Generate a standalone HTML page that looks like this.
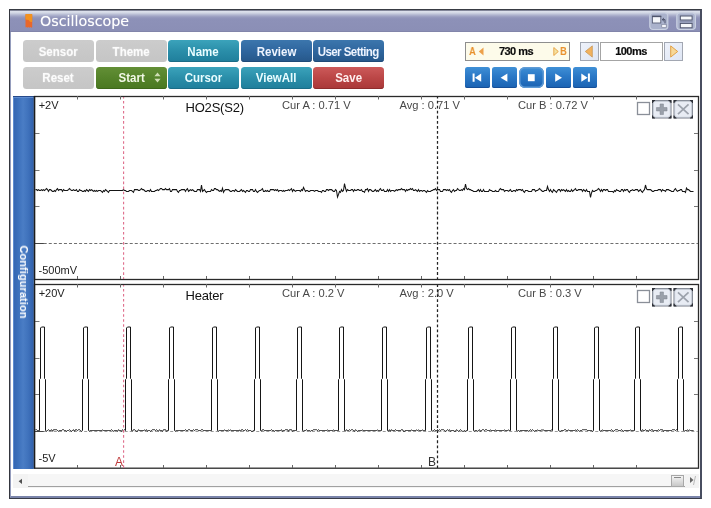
<!DOCTYPE html>
<html><head><meta charset="utf-8"><title>Oscilloscope</title>
<style>
html,body{margin:0;padding:0;background:#fff}
body{width:711px;height:508px;position:relative;overflow:hidden;font-family:"Liberation Sans",Arial,sans-serif}
.abs{position:absolute}
#ttl,.b,.num,.or,#cfg{will-change:transform}
#win{position:absolute;left:9px;top:9px;width:693px;height:490px;box-sizing:border-box;background:#fff;
 border-top:1px solid #383b43;border-left:1px solid #34363e;border-right:2px solid #484e60;border-bottom:1px solid #383c48}
#win:before{content:"";position:absolute;left:0;top:0;right:0;bottom:0;border-left:1.5px solid #959dbd;border-bottom:2px solid #7a84aa;border-right:0}
#tbar{position:absolute;left:10px;top:10px;width:690px;height:22px;
 background:linear-gradient(to bottom,#62667a 0,#8e92a4 0.7px,#d6dae6 1.2px,#dde1ec 1.6px,#d0d5e3 3px,#b0b5cf 5px,#979bbe 7px,#8d91b8 9px,#8b8fb6 20.5px,#7d80a4 22px)}
#ttl{position:absolute;left:39.7px;top:11.4px;font:14.3px "DejaVu Sans",Verdana,sans-serif;color:#fff;line-height:21px;letter-spacing:0px;text-shadow:0 0 1px rgba(255,255,255,.5)}
.b{position:absolute;width:70.6px;height:21.5px;border-radius:3.5px;color:#fff;font:bold 12.5px/24px "Liberation Sans",Arial,sans-serif;text-align:center;box-sizing:border-box;white-space:nowrap;overflow:hidden}
.b.r2{line-height:22.8px}
.b .t{display:inline-block;transform:scaleX(.92);transform-origin:50% 50%}
.gy{background:linear-gradient(#cccccc,#c5c5c5);text-shadow:0 0 1.5px rgba(255,255,255,.6);color:rgba(255,255,255,.88)}
.tl{background:linear-gradient(#3ba3bb,#2a8ea9 50%,#1f7e9b);box-shadow:inset 0 -1px 0 #1a6c86;color:#e9fdff}
.bl{background:linear-gradient(#3c76ad,#2f669e 50%,#265789);box-shadow:inset 0 -1px 0 #1f4a78;color:#eef4ff}
.gn{background:linear-gradient(#638f36,#55832a 50%,#4a7821);box-shadow:inset 0 -1px 0 #3e681a;color:#f2f8e6}
.rd{background:linear-gradient(#cc5a5a,#bb4646 50%,#a93838);box-shadow:inset 0 -1px 0 #8e2c2c;color:#fff0f0}
.pb{position:absolute;width:24.5px;height:21px;border-radius:2.5px;background:linear-gradient(#3f8fd6,#2a78c6 45%,#1a62b2);box-shadow:inset 0 -1px 0 #164f98}
.pb.st{border-radius:6px;box-shadow:inset 0 0 0 1.5px #5f9bd6}
.pb svg{position:absolute;left:0;top:0}
#side{position:absolute;left:13px;top:96px;width:21px;height:372.5px;background:linear-gradient(to right,#3464b0 0,#3b6fbb 22%,#4a7dc5 48%,#3f72bc 72%,#2f5eaa 100%);border-top:1px solid #264a8a;box-shadow:inset 1px 1px 0 #5d8bd0,inset -1px 0 0 #5382c8;box-sizing:border-box}
#cfg{position:absolute;left:24px;top:282.3px;width:0;height:0}
#cfg span{position:absolute;left:0;top:0;transform:translate(-50%,-50%) rotate(90deg);white-space:nowrap;color:#fff;font:bold 11px "Liberation Sans",Arial,sans-serif;letter-spacing:0.07px}
.box{position:absolute;box-sizing:border-box;border:1px solid #8c8c8c}
.num{font:bold 11px/17px "Liberation Sans",Arial,sans-serif;color:#0c0c0c;-webkit-text-stroke:0.2px #111;letter-spacing:-0.55px;text-align:center}
.or{color:#e8902c;font:bold 11px/17px "Liberation Sans",Arial,sans-serif;position:absolute;transform:scaleX(.86);transform-origin:0 50%}
</style></head><body>
<div id="win"></div>
<div id="tbar"></div>
<svg class="abs" style="left:24px;top:13px" width="10" height="16" viewBox="0 0 10 16"><path d="M2,1h5.6l0.6,0.6v12.6l-0.9,0.6l-0.9,-0.9l-0.9,0.9l-0.9,-0.9l-0.9,0.9l-0.9,-0.9l-0.9,0.6l-0.4,-0.4v-12.5z" fill="#e9672a"/><path d="M2,1h5.6l0.6,0.6v7.4l-2.2,-0.2l-1.4,-1.8l-3.1,-0.4v-5z" fill="#f2921f"/></svg>
<div id="ttl">Oscilloscope</div>
<!-- title icons -->
<svg class="abs" style="left:649px;top:11.5px" width="48" height="19" viewBox="0 0 48 19">
<rect x="0.8" y="0.9" width="18" height="16.6" rx="3.2" fill="#aab2cc" stroke="#c9d0e1" stroke-width="1.2"/>
<rect x="3.4" y="4.6" width="8.4" height="6.4" fill="#f4f6fa" stroke="#5a6078" stroke-width="0.9"/>
<rect x="3" y="3.6" width="9.3" height="1.5" fill="#4e546c"/>
<rect x="12.8" y="12.4" width="4.4" height="3.2" fill="#f4f6fa" stroke="#787e96" stroke-width="0.6"/>
<path d="M13.2,7.6h2.8v3.8M13.2,7.6l1.7,-1.6M13.2,7.6l1.7,1.6" stroke="#4a5068" stroke-width="1" fill="none"/>
<rect x="27.8" y="0.9" width="18.6" height="16.6" rx="3.2" fill="#aab2cc" stroke="#c9d0e1" stroke-width="1.2"/>
<rect x="31.3" y="4" width="11.8" height="4" fill="#f6f8fb" stroke="#50566e" stroke-width="1"/>
<rect x="31.3" y="11.4" width="11.8" height="4.4" fill="#f6f8fb" stroke="#50566e" stroke-width="1"/>
<rect x="30.8" y="9.4" width="12.8" height="0.8" fill="#7a80a0"/>
</svg>
<div class="b gy" style="left:23.2px;top:40.3px"><span class="t">Sensor</span></div><div class="b gy" style="left:95.7px;top:40.3px"><span class="t">Theme</span></div><div class="b tl" style="left:168.1px;top:40.3px"><span class="t">Name</span></div><div class="b bl" style="left:240.6px;top:40.3px"><span class="t">Review</span></div><div class="b bl" style="left:313.0px;top:40.3px"><span class="t"><span style="letter-spacing:-0.6px">User Setting</span></span></div><div class="b gy r2" style="left:23.2px;top:66.5px"><span class="t">Reset</span></div><div class="b gn r2" style="left:95.7px;top:66.5px"><span class="t"><span style="position:relative;left:0.5px">Start</span></span><svg width="9" height="11" viewBox="0 0 9 11" style="position:absolute;left:57px;top:4.8px"><path d="M4.5,0.6L7.6,4.3H1.4zM4.5,10.4L7.6,6.7H1.4z" fill="#cfddb4"/></svg></div><div class="b tl r2" style="left:168.1px;top:66.5px"><span class="t">Cursor</span></div><div class="b tl r2" style="left:240.6px;top:66.5px"><span class="t">ViewAll</span></div><div class="b rd r2" style="left:313.0px;top:66.5px"><span class="t">Save</span></div>
<!-- A/B range box -->
<div class="box" style="left:465px;top:42px;width:105px;height:18.5px;background:#fdfbea;border-color:#8e8e8e"></div>
<div class="or" style="left:469px;top:43px">A</div>
<svg class="abs" style="left:477.5px;top:47px" width="6" height="9" viewBox="0 0 6 9"><path d="M5.5,0.5v8L0.8,4.5z" fill="#eda04a"/></svg>
<div class="abs num" style="left:490px;top:43px;width:52px">730 ms</div>
<svg class="abs" style="left:553px;top:47px" width="6" height="9" viewBox="0 0 6 9"><path d="M0.8,0.5v8L5.3,4.5z" fill="#f4e2a0" stroke="#e8a040" stroke-width="0.9"/></svg>
<div class="or" style="left:559.5px;top:43px">B</div>
<!-- time/div -->
<div class="box" style="left:580px;top:42px;width:18.5px;height:18.5px;background:linear-gradient(135deg,#eef2fb,#dfe6f4);border-color:#a2a7b2"></div>
<svg class="abs" style="left:584px;top:45px" width="10" height="13" viewBox="0 0 10 13"><path d="M8.3,0.9v11.2L1.3,6.5z" fill="#f2b25e" stroke="#c89858" stroke-width="0.8"/></svg>
<div class="box" style="left:600px;top:42px;width:62.5px;height:18.5px;background:#fff;border-color:#a4a4a4"></div>
<div class="abs num" style="left:600px;top:43px;width:62px">100ms</div>
<div class="box" style="left:664px;top:42px;width:18.5px;height:18.5px;background:linear-gradient(135deg,#eef2fb,#dfe6f4);border-color:#a2a7b2"></div>
<svg class="abs" style="left:669px;top:45px" width="10" height="13" viewBox="0 0 10 13"><path d="M1.7,0.9v11.2L8.7,6.5z" fill="#f7d898" stroke="#e09a38" stroke-width="0.9"/></svg>
<div class="pb" style="left:465.4px;top:66.5px"><svg width="24.5" height="21" viewBox="0 0 24.5 21"><path d="M7.6,6.6h2v8.2h-2zM16.2,6.6v8.2L9.9,10.7z" fill="#fff"/></svg></div><div class="pb" style="left:492.2px;top:66.5px"><svg width="24.5" height="21" viewBox="0 0 24.5 21"><path d="M15.4,6.6v8.2L8.6,10.7z" fill="#fff"/></svg></div><div class="pb st" style="left:519.1px;top:66.5px"><svg width="24.5" height="21" viewBox="0 0 24.5 21"><rect x="8.9" y="7.2" width="6.8" height="7" fill="#fff"/></svg></div><div class="pb" style="left:546.0px;top:66.5px"><svg width="24.5" height="21" viewBox="0 0 24.5 21"><path d="M9.2,6.6v8.2L16,10.7z" fill="#fff"/></svg></div><div class="pb" style="left:572.8px;top:66.5px"><svg width="24.5" height="21" viewBox="0 0 24.5 21"><path d="M14.9,6.6h2v8.2h-2zM8.3,6.6v8.2L14.6,10.7z" fill="#fff"/></svg></div>
<div id="side"></div>
<div id="cfg"><span>Configuration</span></div>
<svg width="711" height="508" viewBox="0 0 711 508" style="position:absolute;left:0;top:0;will-change:transform">
<style>
.lb{font:11px "Liberation Sans",Arial,sans-serif;fill:#222}
.g{fill:#484848;font-size:11.15px}
.tt{font:13px "Liberation Sans",Arial,sans-serif;fill:#111;letter-spacing:-0.2px}
</style>
<rect x="34.5" y="96.5" width="664" height="183" fill="#fff" stroke="#2a2a2a" stroke-width="1.3"/><line x1="35" y1="133.5" x2="39.5" y2="133.5" stroke="#777" stroke-width="1"/><line x1="694" y1="133.5" x2="698" y2="133.5" stroke="#777" stroke-width="1"/><line x1="35" y1="170.5" x2="39.5" y2="170.5" stroke="#777" stroke-width="1"/><line x1="694" y1="170.5" x2="698" y2="170.5" stroke="#777" stroke-width="1"/><line x1="35" y1="206.5" x2="39.5" y2="206.5" stroke="#777" stroke-width="1"/><line x1="694" y1="206.5" x2="698" y2="206.5" stroke="#777" stroke-width="1"/><line x1="35" y1="243.5" x2="44" y2="243.5" stroke="#444" stroke-width="1"/><line x1="43.7" y1="243.5" x2="698" y2="243.5" stroke="#6e6e6e" stroke-width="1" stroke-dasharray="3 2.06"/><line x1="77.5" y1="96" x2="77.5" y2="99.5" stroke="#666" stroke-width="1"/><line x1="77.5" y1="276" x2="77.5" y2="279" stroke="#666" stroke-width="1"/><line x1="120.5" y1="96" x2="120.5" y2="99.5" stroke="#666" stroke-width="1"/><line x1="120.5" y1="276" x2="120.5" y2="279" stroke="#666" stroke-width="1"/><line x1="163.5" y1="96" x2="163.5" y2="99.5" stroke="#666" stroke-width="1"/><line x1="163.5" y1="276" x2="163.5" y2="279" stroke="#666" stroke-width="1"/><line x1="206.5" y1="96" x2="206.5" y2="99.5" stroke="#666" stroke-width="1"/><line x1="206.5" y1="276" x2="206.5" y2="279" stroke="#666" stroke-width="1"/><line x1="249.5" y1="96" x2="249.5" y2="99.5" stroke="#666" stroke-width="1"/><line x1="249.5" y1="276" x2="249.5" y2="279" stroke="#666" stroke-width="1"/><line x1="292.5" y1="96" x2="292.5" y2="99.5" stroke="#666" stroke-width="1"/><line x1="292.5" y1="276" x2="292.5" y2="279" stroke="#666" stroke-width="1"/><line x1="335.5" y1="96" x2="335.5" y2="99.5" stroke="#666" stroke-width="1"/><line x1="335.5" y1="276" x2="335.5" y2="279" stroke="#666" stroke-width="1"/><line x1="378.5" y1="96" x2="378.5" y2="99.5" stroke="#666" stroke-width="1"/><line x1="378.5" y1="276" x2="378.5" y2="279" stroke="#666" stroke-width="1"/><line x1="421.5" y1="96" x2="421.5" y2="99.5" stroke="#666" stroke-width="1"/><line x1="421.5" y1="276" x2="421.5" y2="279" stroke="#666" stroke-width="1"/><line x1="464.5" y1="96" x2="464.5" y2="99.5" stroke="#666" stroke-width="1"/><line x1="464.5" y1="276" x2="464.5" y2="279" stroke="#666" stroke-width="1"/><line x1="507.5" y1="96" x2="507.5" y2="99.5" stroke="#666" stroke-width="1"/><line x1="507.5" y1="276" x2="507.5" y2="279" stroke="#666" stroke-width="1"/><line x1="550.5" y1="96" x2="550.5" y2="99.5" stroke="#666" stroke-width="1"/><line x1="550.5" y1="276" x2="550.5" y2="279" stroke="#666" stroke-width="1"/><line x1="593.5" y1="96" x2="593.5" y2="99.5" stroke="#666" stroke-width="1"/><line x1="593.5" y1="276" x2="593.5" y2="279" stroke="#666" stroke-width="1"/><line x1="636.5" y1="96" x2="636.5" y2="99.5" stroke="#666" stroke-width="1"/><line x1="636.5" y1="276" x2="636.5" y2="279" stroke="#666" stroke-width="1"/><text x="38.7" y="108.8" class="lb">+2V</text><text x="38.5" y="273.8" class="lb">-500mV</text><text x="185.5" y="112" class="tt">HO2S(S2)</text><text x="282" y="108.3" class="lb g" dy="0.5">Cur A : 0.71 V</text><text x="399.5" y="108.3" class="lb g" dy="0.5">Avg : 0.71 V</text><text x="518" y="108.3" class="lb g" dy="0.5">Cur B : 0.72 V</text><rect x="637.5" y="102.5" width="12" height="12" fill="#fff" stroke="#8a8f98" stroke-width="1.3"/><rect x="652" y="100" width="19.5" height="18.5" rx="1" fill="#767b86"/><rect x="652" y="100" width="3" height="3" fill="#2e3138"/><rect x="668.5" y="100" width="3" height="3" fill="#2e3138"/><rect x="652" y="115.5" width="3" height="3" fill="#2e3138"/><rect x="668.5" y="115.5" width="3" height="3" fill="#2e3138"/><rect x="653.2" y="101.2" width="17.1" height="16.1" rx="2.6" fill="#e8ecf4" stroke="#c4cad4" stroke-width="0.8"/><path d="M660.05,103.95h3.4v3.6h3.6v3.4h-3.6v3.6h-3.4v-3.6h-3.6v-3.4h3.6z" fill="#9aa0aa" stroke="#7c828c" stroke-width="0.5"/><rect x="673.5" y="100" width="19.5" height="18.5" rx="1" fill="#767b86"/><rect x="673.5" y="100" width="3" height="3" fill="#2e3138"/><rect x="690.0" y="100" width="3" height="3" fill="#2e3138"/><rect x="673.5" y="115.5" width="3" height="3" fill="#2e3138"/><rect x="690.0" y="115.5" width="3" height="3" fill="#2e3138"/><rect x="674.7" y="101.2" width="17.1" height="16.1" rx="2.6" fill="#e8ecf4" stroke="#c4cad4" stroke-width="0.8"/><path d="M677.95,104.45L688.55,114.05M688.55,104.45L677.95,114.05" stroke="#9ca2ac" stroke-width="1.7" fill="none"/>
<rect x="34.5" y="284.5" width="664" height="183.7" fill="#fff" stroke="#2a2a2a" stroke-width="1.3"/><line x1="35" y1="321.5" x2="39.5" y2="321.5" stroke="#777" stroke-width="1"/><line x1="694" y1="321.5" x2="698" y2="321.5" stroke="#777" stroke-width="1"/><line x1="35" y1="358.5" x2="39.5" y2="358.5" stroke="#777" stroke-width="1"/><line x1="694" y1="358.5" x2="698" y2="358.5" stroke="#777" stroke-width="1"/><line x1="35" y1="394.5" x2="39.5" y2="394.5" stroke="#777" stroke-width="1"/><line x1="694" y1="394.5" x2="698" y2="394.5" stroke="#777" stroke-width="1"/><line x1="35" y1="431.5" x2="44" y2="431.5" stroke="#444" stroke-width="1"/><line x1="43.7" y1="431.5" x2="698" y2="431.5" stroke="#9a9a9a" stroke-width="1" stroke-dasharray="3 2.06"/><line x1="77.5" y1="284" x2="77.5" y2="287.5" stroke="#666" stroke-width="1"/><line x1="77.5" y1="465" x2="77.5" y2="468" stroke="#666" stroke-width="1"/><line x1="120.5" y1="284" x2="120.5" y2="287.5" stroke="#666" stroke-width="1"/><line x1="120.5" y1="465" x2="120.5" y2="468" stroke="#666" stroke-width="1"/><line x1="163.5" y1="284" x2="163.5" y2="287.5" stroke="#666" stroke-width="1"/><line x1="163.5" y1="465" x2="163.5" y2="468" stroke="#666" stroke-width="1"/><line x1="206.5" y1="284" x2="206.5" y2="287.5" stroke="#666" stroke-width="1"/><line x1="206.5" y1="465" x2="206.5" y2="468" stroke="#666" stroke-width="1"/><line x1="249.5" y1="284" x2="249.5" y2="287.5" stroke="#666" stroke-width="1"/><line x1="249.5" y1="465" x2="249.5" y2="468" stroke="#666" stroke-width="1"/><line x1="292.5" y1="284" x2="292.5" y2="287.5" stroke="#666" stroke-width="1"/><line x1="292.5" y1="465" x2="292.5" y2="468" stroke="#666" stroke-width="1"/><line x1="335.5" y1="284" x2="335.5" y2="287.5" stroke="#666" stroke-width="1"/><line x1="335.5" y1="465" x2="335.5" y2="468" stroke="#666" stroke-width="1"/><line x1="378.5" y1="284" x2="378.5" y2="287.5" stroke="#666" stroke-width="1"/><line x1="378.5" y1="465" x2="378.5" y2="468" stroke="#666" stroke-width="1"/><line x1="421.5" y1="284" x2="421.5" y2="287.5" stroke="#666" stroke-width="1"/><line x1="421.5" y1="465" x2="421.5" y2="468" stroke="#666" stroke-width="1"/><line x1="464.5" y1="284" x2="464.5" y2="287.5" stroke="#666" stroke-width="1"/><line x1="464.5" y1="465" x2="464.5" y2="468" stroke="#666" stroke-width="1"/><line x1="507.5" y1="284" x2="507.5" y2="287.5" stroke="#666" stroke-width="1"/><line x1="507.5" y1="465" x2="507.5" y2="468" stroke="#666" stroke-width="1"/><line x1="550.5" y1="284" x2="550.5" y2="287.5" stroke="#666" stroke-width="1"/><line x1="550.5" y1="465" x2="550.5" y2="468" stroke="#666" stroke-width="1"/><line x1="593.5" y1="284" x2="593.5" y2="287.5" stroke="#666" stroke-width="1"/><line x1="593.5" y1="465" x2="593.5" y2="468" stroke="#666" stroke-width="1"/><line x1="636.5" y1="284" x2="636.5" y2="287.5" stroke="#666" stroke-width="1"/><line x1="636.5" y1="465" x2="636.5" y2="468" stroke="#666" stroke-width="1"/><text x="38.7" y="296.8" class="lb">+20V</text><text x="38.5" y="462.1" class="lb">-5V</text><text x="185.5" y="300" class="tt">Heater</text><text x="282" y="296.3" class="lb g" dy="0.5">Cur A : 0.2 V</text><text x="399.5" y="296.3" class="lb g" dy="0.5">Avg : 2.0 V</text><text x="518" y="296.3" class="lb g" dy="0.5">Cur B : 0.3 V</text><rect x="637.5" y="290.5" width="12" height="12" fill="#fff" stroke="#8a8f98" stroke-width="1.3"/><rect x="652" y="288" width="19.5" height="18.5" rx="1" fill="#767b86"/><rect x="652" y="288" width="3" height="3" fill="#2e3138"/><rect x="668.5" y="288" width="3" height="3" fill="#2e3138"/><rect x="652" y="303.5" width="3" height="3" fill="#2e3138"/><rect x="668.5" y="303.5" width="3" height="3" fill="#2e3138"/><rect x="653.2" y="289.2" width="17.1" height="16.1" rx="2.6" fill="#e8ecf4" stroke="#c4cad4" stroke-width="0.8"/><path d="M660.05,291.95h3.4v3.6h3.6v3.4h-3.6v3.6h-3.4v-3.6h-3.6v-3.4h3.6z" fill="#9aa0aa" stroke="#7c828c" stroke-width="0.5"/><rect x="673.5" y="288" width="19.5" height="18.5" rx="1" fill="#767b86"/><rect x="673.5" y="288" width="3" height="3" fill="#2e3138"/><rect x="690.0" y="288" width="3" height="3" fill="#2e3138"/><rect x="673.5" y="303.5" width="3" height="3" fill="#2e3138"/><rect x="690.0" y="303.5" width="3" height="3" fill="#2e3138"/><rect x="674.7" y="289.2" width="17.1" height="16.1" rx="2.6" fill="#e8ecf4" stroke="#c4cad4" stroke-width="0.8"/><path d="M677.95,292.45L688.55,302.05M688.55,292.45L677.95,302.05" stroke="#9ca2ac" stroke-width="1.7" fill="none"/>
<line x1="34.5" y1="96" x2="34.5" y2="468.5" stroke="#1c1c1c" stroke-width="1.4"/>
<polyline points="35.5,189.6 36.5,189.6 37.5,190.5 38.5,189.6 39.5,190.5 40.5,190.5 41.5,189.6 42.5,190.5 43.5,189.6 44.5,190.5 45.5,189.6 46.5,188.6 47.5,189.6 48.5,191.4 49.5,189.6 50.5,189.6 51.5,190.5 52.5,191.4 53.5,191.4 54.5,190.5 55.5,191.4 56.5,189.6 57.5,188.7 58.5,190.5 59.5,189.6 60.5,189.6 61.5,189.6 62.5,191.4 63.5,189.6 64.5,190.5 65.5,190.5 66.5,190.5 67.5,190.5 68.5,189.6 69.5,188.6 70.5,189.6 71.5,190.5 72.5,190.5 73.5,189.6 74.5,190.5 75.5,190.5 76.5,189.6 77.5,191.4 78.5,191.4 79.5,189.6 80.5,190.5 81.5,190.5 82.5,191.4 83.5,191.4 84.5,190.5 85.5,191.4 86.5,189.6 87.5,190.5 88.5,191.4 89.5,189.6 90.5,190.5 91.5,189.6 92.5,190.5 93.5,191.4 94.5,190.5 95.5,191.4 96.5,190.5 97.5,191.4 98.5,190.5 99.5,190.5 100.5,190.5 101.5,191.4 102.5,192.4 103.5,190.5 104.5,191.4 105.5,189.6 106.5,190.5 107.5,191.4 108.5,192.4 109.5,190.5 110.5,190.5 111.5,190.5 112.5,190.5 113.5,190.5 114.5,190.5 115.5,190.5 116.5,190.5 117.5,190.5 118.5,190.5 119.5,190.5 120.5,190.5 121.5,190.5 122.5,190.5 123.5,189.6 124.5,190.5 125.5,190.5 126.5,191.4 127.5,191.4 128.5,191.4 129.5,190.5 130.5,190.5 131.5,190.5 132.5,191.4 133.5,192.4 134.5,189.6 135.5,189.6 136.5,189.6 137.5,189.6 138.5,190.5 139.5,190.5 140.5,189.6 141.5,188.6 142.5,189.6 143.5,189.6 144.5,190.5 145.5,191.4 146.5,191.4 147.5,190.5 148.5,190.5 149.5,191.4 150.5,189.6 151.5,191.4 152.5,191.4 153.5,191.4 154.5,191.4 155.5,190.5 156.5,190.5 157.5,189.6 158.5,190.5 159.5,189.6 160.5,188.6 161.5,188.5 162.5,189.6 163.5,189.6 164.5,189.6 165.5,188.6 166.5,189.6 167.5,189.6 168.5,189.6 169.5,188.6 170.5,191.4 171.5,191.4 172.5,189.6 173.5,189.6 174.5,189.6 175.5,189.6 176.5,189.6 177.5,191.4 178.5,192.4 179.5,190.5 180.5,190.5 181.5,189.6 182.5,189.6 183.5,189.6 184.5,189.6 185.5,191.4 186.5,189.6 187.5,188.6 188.5,191.4 189.5,190.5 190.5,189.6 191.5,190.5 192.5,189.6 193.5,190.5 194.5,191.4 195.5,191.4 196.5,191.4 197.5,189.6 198.5,189.6 199.5,189.6 200.5,191.4 201.5,185 202.5,191.4 203.5,190.5 204.5,189.6 205.5,191.4 206.5,192.4 207.5,191.4 208.5,191.4 209.5,191.4 210.5,191.4 211.5,189.6 212.5,190.5 213.5,190.5 214.5,188.6 215.5,188.6 216.5,189.6 217.5,189.6 218.5,190.5 219.5,191.4 220.5,190.5 221.5,191.4 222.5,188.3 223.5,192.4 224.5,190.5 225.5,189.6 226.5,189.6 227.5,189.6 228.5,189.6 229.5,190.5 230.5,191.4 231.5,191.4 232.5,190.5 233.5,190.5 234.5,191.4 235.5,189.6 236.5,190.5 237.5,191.4 238.5,191.4 239.5,191.4 240.5,190.5 241.5,189.6 242.5,191.4 243.5,190.5 244.5,191.4 245.5,192.4 246.5,190.5 247.5,190.5 248.5,191.4 249.5,191.4 250.5,189.6 251.5,189.6 252.5,189.6 253.5,191.4 254.5,191.4 255.5,189.6 256.5,191.4 257.5,192.4 258.5,191.4 259.5,190.5 260.5,190.5 261.5,189.6 262.5,188.6 263.5,191.4 264.5,191.4 265.5,190.5 266.5,191.4 267.5,190.5 268.5,191.4 269.5,191.4 270.5,189.6 271.5,189.6 272.5,189.6 273.5,189.6 274.5,190.5 275.5,189.6 276.5,190.5 277.5,189.6 278.5,191.4 279.5,190.5 280.5,190.5 281.5,190.5 282.5,191.4 283.5,190.5 284.5,191.4 285.5,190.5 286.5,190.5 287.5,190.5 288.5,189.6 289.5,190.5 290.5,189.6 291.5,188.6 292.5,191.4 293.5,189.6 294.5,190.5 295.5,191.4 296.5,190.5 297.5,190.5 298.5,190.5 299.5,190.5 300.5,191.4 301.5,189.6 302.5,190.5 303.5,187.5 304.5,189.6 305.5,191.4 306.5,190.5 307.5,190.5 308.5,191.4 309.5,191.4 310.5,190.5 311.5,190.5 312.5,190.5 313.5,190.5 314.5,191.4 315.5,190.5 316.5,190.5 317.5,190.5 318.5,191.4 319.5,191.4 320.5,191.4 321.5,192.4 322.5,190.5 323.5,190.5 324.5,191.4 325.5,191.4 326.5,189.6 327.5,189.6 328.5,190.5 329.5,189.6 330.5,189.6 331.5,189.6 332.5,190.5 333.5,191.4 334.5,191.4 335.5,189.6 336.5,190.5 337.5,197 338.5,194.5 339.5,191.4 340.5,192.4 341.5,189.6 342.5,191.4 343.5,190.5 344.5,183.5 345.5,188 346.5,191.4 347.5,189.6 348.5,190.5 349.5,190.5 350.5,190.5 351.5,189.6 352.5,189.6 353.5,191.4 354.5,189.6 355.5,190.5 356.5,190.5 357.5,189.6 358.5,189.6 359.5,190.5 360.5,190.5 361.5,189.6 362.5,191.4 363.5,191.4 364.5,192.4 365.5,189.6 366.5,189.6 367.5,188.6 368.5,191.4 369.5,189.6 370.5,189.6 371.5,190.5 372.5,191.4 373.5,191.4 374.5,190.5 375.5,189.6 376.5,191.4 377.5,190.5 378.5,191.4 379.5,189.6 380.5,188.6 381.5,190.5 382.5,190.5 383.5,189.6 384.5,191.4 385.5,191.4 386.5,191.4 387.5,189.6 388.5,191.4 389.5,189.6 390.5,191.4 391.5,190.5 392.5,190.5 393.5,190.5 394.5,191.4 395.5,190.5 396.5,189.6 397.5,190.5 398.5,189.6 399.5,189.6 400.5,189.6 401.5,188.6 402.5,189.6 403.5,189.6 404.5,189.6 405.5,191.4 406.5,189.6 407.5,190.5 408.5,189.6 409.5,189.6 410.5,188.6 411.5,189.6 412.5,188.6 413.5,190.5 414.5,190.5 415.5,189.6 416.5,190.5 417.5,191.4 418.5,189.6 419.5,191.4 420.5,190.5 421.5,190.5 422.5,191.4 423.5,190.5 424.5,190.5 425.5,191.4 426.5,192.4 427.5,190.5 428.5,191.4 429.5,191.4 430.5,191.4 431.5,190.5 432.5,190.5 433.5,189.6 434.5,189.6 435.5,188.6 436.5,190.5 437.5,189.6 438.5,189.6 439.5,189.6 440.5,191.4 441.5,191.4 442.5,191.4 443.5,189.6 444.5,189.6 445.5,189.6 446.5,190.5 447.5,189.6 448.5,190.5 449.5,189.6 450.5,191.4 451.5,192.4 452.5,190.5 453.5,189.6 454.5,191.4 455.5,190.5 456.5,190.5 457.5,188.6 458.5,189.6 459.5,190.5 460.5,190.5 461.5,189.6 462.5,190.5 463.5,188.6 464.5,189.6 465.5,184 466.5,188.5 467.5,189.6 468.5,188.6 469.5,189.6 470.5,189.6 471.5,190.5 472.5,190.5 473.5,191.4 474.5,191.4 475.5,191.4 476.5,191.4 477.5,190.5 478.5,189.6 479.5,191.4 480.5,189.6 481.5,191.4 482.5,191.4 483.5,189.6 484.5,191.4 485.5,191.4 486.5,191.4 487.5,191.4 488.5,191.4 489.5,189.6 490.5,190.5 491.5,190.5 492.5,191.4 493.5,191.4 494.5,191.4 495.5,190.5 496.5,191.4 497.5,191.4 498.5,191.4 499.5,189.6 500.5,188.6 501.5,189.6 502.5,189.6 503.5,189.6 504.5,191.4 505.5,190.5 506.5,190.5 507.5,190.5 508.5,191.4 509.5,190.5 510.5,189.6 511.5,191.4 512.5,191.4 513.5,190.5 514.5,190.5 515.5,191.4 516.5,189.6 517.5,190.5 518.5,189.6 519.5,189.6 520.5,189.6 521.5,190.5 522.5,189.6 523.5,191.4 524.5,192.4 525.5,190.5 526.5,190.5 527.5,190.5 528.5,191.4 529.5,191.4 530.5,191.4 531.5,191.4 532.5,189.6 533.5,189.6 534.5,189.6 535.5,191.4 536.5,190.5 537.5,190.5 538.5,189.6 539.5,188.6 540.5,189.6 541.5,190.5 542.5,191.4 543.5,191.4 544.5,190.5 545.5,190.5 546.5,190.5 547.5,186.5 548.5,189.6 549.5,191.4 550.5,189.6 551.5,191.4 552.5,192.4 553.5,189.6 554.5,190.5 555.5,191.4 556.5,192.4 557.5,190.5 558.5,189.6 559.5,189.6 560.5,191.4 561.5,189.6 562.5,190.5 563.5,189.6 564.5,190.5 565.5,191.4 566.5,189.6 567.5,191.4 568.5,190.5 569.5,191.4 570.5,191.4 571.5,189.6 572.5,191.4 573.5,190.5 574.5,189.6 575.5,188.6 576.5,190.5 577.5,190.5 578.5,189.6 579.5,189.6 580.5,189.6 581.5,189.6 582.5,191.4 583.5,189.6 584.5,190.5 585.5,191.4 586.5,189.6 587.5,191.4 588.5,191.4 589.5,191.4 590.5,197.5 591.5,193 592.5,190.5 593.5,191.4 594.5,191.4 595.5,190.5 596.5,190.5 597.5,189.6 598.5,188.6 599.5,189.6 600.5,191.4 601.5,189.6 602.5,191.4 603.5,189.6 604.5,189.6 605.5,190.5 606.5,189.6 607.5,189.6 608.5,191.4 609.5,191.4 610.5,191.4 611.5,191.4 612.5,191.4 613.5,192.4 614.5,190.5 615.5,191.4 616.5,189.6 617.5,190.5 618.5,190.5 619.5,191.4 620.5,191.4 621.5,189.6 622.5,189.6 623.5,191.4 624.5,189.6 625.5,190.5 626.5,189.6 627.5,189.6 628.5,191.4 629.5,192.4 630.5,190.5 631.5,190.5 632.5,189.6 633.5,190.5 634.5,190.5 635.5,189.6 636.5,189.6 637.5,189.6 638.5,191.4 639.5,190.5 640.5,189.6 641.5,191.4 642.5,192.4 643.5,190.5 644.5,189.6 645.5,185 646.5,189 647.5,189.6 648.5,189.6 649.5,189.6 650.5,189.6 651.5,190.5 652.5,191.4 653.5,191.4 654.5,190.5 655.5,190.5 656.5,190.5 657.5,190.5 658.5,189.6 659.5,189.6 660.5,189.6 661.5,191.4 662.5,189.6 663.5,190.5 664.5,190.5 665.5,191.4 666.5,189.6 667.5,189.6 668.5,189.6 669.5,190.5 670.5,190.5 671.5,191.4 672.5,191.4 673.5,191.4 674.5,189.6 675.5,188.6 676.5,190.5 677.5,191.4 678.5,190.5 679.5,190.5 680.5,189.6 681.5,189.6 682.5,191.4 683.5,191.4 684.5,191.4 685.5,192.4 686.5,188 687.5,189.6 688.5,189.6 689.5,190.5 690.5,191.4 691.5,191.4 692.5,191.4 693.5,191.4" fill="none" stroke="#151515" stroke-width="1.05"/>
<polyline points="35.5,429.7 36.5,429.7 37.5,430.5 38.5,430.5 39.5,430.5 39.5,379.5 40.5,378.5 40.5,328 41.5,327 44.5,327 44.5,378.5 45.5,379.5 45.5,430.5 46.5,431.1 47.5,430.5 48.5,429.7 49.5,430.5 50.5,430.5 51.5,429.7 52.5,431.3 53.5,429.7 54.5,429.7 55.5,429.7 56.5,429.7 57.5,430.5 58.5,431.3 59.5,430.5 60.5,430.5 61.5,430.5 62.5,429.7 63.5,429.7 64.5,430.5 65.5,430.5 66.5,431.3 67.5,430.5 68.5,430.5 69.5,429.7 70.5,430.5 71.5,431.3 72.5,430.5 73.5,429.7 74.5,431.3 75.5,429.7 76.5,429.7 77.5,430.5 78.5,429.7 79.5,429.7 80.5,430.5 81.5,431.3 82.5,430.5 82.5,379.5 83.5,378.5 83.5,328 84.5,327 87.5,327 87.5,378.5 88.5,379.5 88.5,430.5 89.5,431.1 90.5,430.5 91.5,430.5 92.5,430.5 93.5,430.5 94.5,430.5 95.5,430.5 96.5,430.5 97.5,430.5 98.5,430.5 99.5,430.5 100.5,430.5 101.5,430.5 102.5,430 103.5,430.5 104.5,430.5 105.5,430.5 106.5,430.5 107.5,430.5 108.5,430.5 109.5,430.5 110.5,430.5 111.5,429.7 112.5,430.5 113.5,431.3 114.5,430.5 115.5,430.5 116.5,430.5 117.5,431.3 118.5,429.7 119.5,430.5 120.5,430.5 121.5,431.3 122.5,429.7 123.5,430.5 124.5,429.7 125.5,430.5 125.5,379.5 126.5,378.5 126.5,328 127.5,327 130.5,327 130.5,378.5 131.5,379.5 131.5,430.5 132.5,431.1 133.5,429.7 134.5,429.7 135.5,430.5 136.5,431.3 137.5,431.3 138.5,429.7 139.5,430.5 140.5,430.5 141.5,430.5 142.5,430.5 143.5,430.5 144.5,430 145.5,430.5 146.5,429.7 147.5,431.3 148.5,430.5 149.5,430.5 150.5,431.3 151.5,430.5 152.5,429.7 153.5,429.7 154.5,429.7 155.5,430.5 156.5,429.7 157.5,430.5 158.5,431.3 159.5,429.7 160.5,430.5 161.5,430.5 162.5,431.3 163.5,429.7 164.5,429.7 165.5,429.7 166.5,431.3 167.5,430.5 168.5,430.5 168.5,379.5 169.5,378.5 169.5,328 170.5,327 173.5,327 173.5,378.5 174.5,379.5 174.5,430.5 175.5,431.1 176.5,430.5 177.5,430.5 178.5,430.5 179.5,430.5 180.5,430.5 181.5,430.5 182.5,430.5 183.5,430.5 184.5,430.5 185.5,429.7 186.5,430.5 187.5,430.5 188.5,429.7 189.5,429.7 190.5,430.5 191.5,430.5 192.5,430.5 193.5,429.7 194.5,430.5 195.5,429.7 196.5,429.7 197.5,429.7 198.5,430.5 199.5,430.5 200.5,430.5 201.5,429.7 202.5,429.7 203.5,430.5 204.5,430.5 205.5,430.5 206.5,430.5 207.5,430.5 208.5,430.5 209.5,430.5 210.5,430.5 211.5,430.5 211.5,379.5 212.5,378.5 212.5,328 213.5,327 216.5,327 216.5,378.5 217.5,379.5 217.5,430.5 218.5,431.1 219.5,430.5 220.5,430.5 221.5,430.5 222.5,430.5 223.5,430.5 224.5,430 225.5,430.5 226.5,430.5 227.5,430.5 228.5,430 229.5,430.5 230.5,430 231.5,430.5 232.5,430.5 233.5,430.5 234.5,430.5 235.5,430.5 236.5,430.5 237.5,430.5 238.5,430.5 239.5,430 240.5,431.3 241.5,429.7 242.5,429.7 243.5,430.5 244.5,430.5 245.5,429.7 246.5,430.5 247.5,429.7 248.5,430.5 249.5,430.5 250.5,430.5 251.5,431.3 252.5,431.3 253.5,430.5 254.5,430.5 254.5,379.5 255.5,378.5 255.5,328 256.5,327 259.5,327 259.5,378.5 260.5,379.5 260.5,430.5 261.5,431.1 262.5,429.7 263.5,429.7 264.5,430.5 265.5,430.5 266.5,430.5 267.5,430.5 268.5,430.5 269.5,430.5 270.5,430.5 271.5,429.7 272.5,430.5 273.5,430.5 274.5,431.3 275.5,430.5 276.5,430.5 277.5,430.5 278.5,430.5 279.5,430.5 280.5,430.5 281.5,429.7 282.5,431.3 283.5,430.5 284.5,430.5 285.5,429.7 286.5,429.7 287.5,429.7 288.5,431.3 289.5,429.7 290.5,429.7 291.5,429.7 292.5,431.3 293.5,430.5 294.5,430.5 295.5,430.5 296.5,430.5 296.5,379.5 297.5,378.5 297.5,328 298.5,327 301.5,327 301.5,378.5 302.5,379.5 302.5,430.5 303.5,431.1 304.5,430.5 305.5,430.5 306.5,429.7 307.5,430.5 308.5,430.5 309.5,430.5 310.5,431.3 311.5,430.5 312.5,430.5 313.5,429.7 314.5,429.7 315.5,429.7 316.5,429.7 317.5,430.5 318.5,429.7 319.5,430.5 320.5,430.5 321.5,430.5 322.5,430.5 323.5,430.5 324.5,430.5 325.5,430.5 326.5,430.5 327.5,430 328.5,430.5 329.5,430.5 330.5,430.5 331.5,430.5 332.5,430.5 333.5,430 334.5,430.5 335.5,430.5 336.5,430.5 337.5,430.5 338.5,430.5 338.5,379.5 339.5,378.5 339.5,328 340.5,327 343.5,327 343.5,378.5 344.5,379.5 344.5,430.5 345.5,431.1 346.5,429.7 347.5,430.5 348.5,430.5 349.5,429.7 350.5,430.5 351.5,429.7 352.5,429.7 353.5,430.5 354.5,431.3 355.5,429.7 356.5,430.5 357.5,431.3 358.5,430.5 359.5,430.5 360.5,430.5 361.5,430.5 362.5,430 363.5,430.5 364.5,430.5 365.5,430.5 366.5,430.5 367.5,430.5 368.5,430.5 369.5,430.5 370.5,430.5 371.5,430.5 372.5,430.5 373.5,430.5 374.5,430.5 375.5,430.5 376.5,430.5 377.5,430 378.5,430.5 379.5,430.5 380.5,430.5 381.5,430.5 381.5,379.5 382.5,378.5 382.5,328 383.5,327 386.5,327 386.5,378.5 387.5,379.5 387.5,430.5 388.5,431.1 389.5,429.7 390.5,431.3 391.5,429.7 392.5,430.5 393.5,430.5 394.5,430.5 395.5,429.7 396.5,430.5 397.5,430.5 398.5,430.5 399.5,430.5 400.5,430.5 401.5,429.7 402.5,429.7 403.5,431.3 404.5,431.3 405.5,430.5 406.5,430.5 407.5,430.5 408.5,430.5 409.5,430.5 410.5,430.5 411.5,430 412.5,430.5 413.5,430.5 414.5,430.5 415.5,430.5 416.5,430 417.5,430.5 418.5,430 419.5,430.5 420.5,430.5 421.5,430.5 422.5,430 423.5,430.5 424.5,430.5 425.5,430.5 425.5,379.5 426.5,378.5 426.5,328 427.5,327 430.5,327 430.5,378.5 431.5,379.5 431.5,430.5 432.5,431.1 433.5,430.5 434.5,429.7 435.5,430.5 436.5,430.5 437.5,429.7 438.5,430.5 439.5,429.7 440.5,430.5 441.5,429.7 442.5,429.7 443.5,429.7 444.5,430.5 445.5,431.3 446.5,430.5 447.5,429.7 448.5,430.5 449.5,429.7 450.5,431.3 451.5,430.5 452.5,430.5 453.5,430.5 454.5,431.3 455.5,431.3 456.5,429.7 457.5,430.5 458.5,431.3 459.5,430.5 460.5,429.7 461.5,430.5 462.5,431.3 463.5,431.3 464.5,430.5 465.5,431.3 466.5,430.5 467.5,430.5 467.5,379.5 468.5,378.5 468.5,328 469.5,327 472.5,327 472.5,378.5 473.5,379.5 473.5,430.5 474.5,431.1 475.5,430.5 476.5,430.5 477.5,431.3 478.5,430.5 479.5,429.7 480.5,431.3 481.5,430.5 482.5,429.7 483.5,429.7 484.5,430.5 485.5,429.7 486.5,429.7 487.5,430.5 488.5,430.5 489.5,430.5 490.5,430 491.5,430.5 492.5,430.5 493.5,430.5 494.5,430.5 495.5,430 496.5,430.5 497.5,430.5 498.5,430.5 499.5,430.5 500.5,430.5 501.5,430.5 502.5,430.5 503.5,430.5 504.5,430 505.5,430.5 506.5,430.5 507.5,430.5 508.5,430 509.5,430.5 510.5,430.5 510.5,379.5 511.5,378.5 511.5,328 512.5,327 515.5,327 515.5,378.5 516.5,379.5 516.5,430.5 517.5,431.1 518.5,430.5 519.5,431.3 520.5,430.5 521.5,430.5 522.5,430.5 523.5,430.5 524.5,430.5 525.5,430.5 526.5,430.5 527.5,430.5 528.5,431.3 529.5,430.5 530.5,429.7 531.5,430.5 532.5,429.7 533.5,430.5 534.5,431.3 535.5,430.5 536.5,430.5 537.5,430 538.5,430.5 539.5,430.5 540.5,430.5 541.5,430 542.5,430 543.5,430 544.5,430.5 545.5,430.5 546.5,430.5 547.5,430.5 548.5,430.5 549.5,430.5 550.5,430.5 551.5,430 552.5,430.5 552.5,379.5 553.5,378.5 553.5,328 554.5,327 557.5,327 557.5,378.5 558.5,379.5 558.5,430.5 559.5,431.1 560.5,431.3 561.5,430.5 562.5,430.5 563.5,430.5 564.5,429.7 565.5,429.7 566.5,430.5 567.5,430.5 568.5,430 569.5,430.5 570.5,430.5 571.5,430.5 572.5,430.5 573.5,430.5 574.5,430.5 575.5,430 576.5,430.5 577.5,429.7 578.5,430.5 579.5,431.3 580.5,430.5 581.5,430.5 582.5,429.7 583.5,429.7 584.5,429.7 585.5,429.7 586.5,429.7 587.5,430.5 588.5,430.5 589.5,430.5 590.5,430.5 591.5,430.5 592.5,431.3 593.5,430.5 593.5,379.5 594.5,378.5 594.5,328 595.5,327 598.5,327 598.5,378.5 599.5,379.5 599.5,430.5 600.5,431.1 601.5,430.5 602.5,430 603.5,430.5 604.5,430.5 605.5,430.5 606.5,430.5 607.5,430.5 608.5,430.5 609.5,430.5 610.5,430.5 611.5,429.7 612.5,430.5 613.5,431.3 614.5,430.5 615.5,429.7 616.5,429.7 617.5,429.7 618.5,430.5 619.5,430.5 620.5,430.5 621.5,429.7 622.5,430.5 623.5,431.3 624.5,430.5 625.5,430.5 626.5,430.5 627.5,430.5 628.5,430.5 629.5,430.5 630.5,430 631.5,430.5 632.5,430.5 633.5,430.5 634.5,430.5 634.5,379.5 635.5,378.5 635.5,328 636.5,327 639.5,327 639.5,378.5 640.5,379.5 640.5,430.5 641.5,431.1 642.5,429.7 643.5,430.5 644.5,430.5 645.5,429.7 646.5,430.5 647.5,430.5 648.5,431.3 649.5,429.7 650.5,430.5 651.5,429.7 652.5,429.7 653.5,431.3 654.5,430.5 655.5,430.5 656.5,430.5 657.5,430.5 658.5,429.7 659.5,430.5 660.5,429.7 661.5,429.7 662.5,429.7 663.5,431.3 664.5,430.5 665.5,430.5 666.5,430.5 667.5,430.5 668.5,430.5 669.5,430.5 670.5,430.5 671.5,430.5 672.5,429.7 673.5,429.7 674.5,429.7 675.5,430.5 676.5,429.7 677.5,430.5 677.5,379.5 678.5,378.5 678.5,328 679.5,327 682.5,327 682.5,378.5 683.5,379.5 683.5,430.5 684.5,431.1 685.5,430.5 686.5,430.5 687.5,430 688.5,430.5 689.5,430 690.5,430.5 691.5,430.5 692.5,430.5 693.5,430.5" fill="none" stroke="#161616" stroke-width="1" stroke-linejoin="miter"/>
<line x1="123.6" y1="97" x2="123.6" y2="279" stroke="#df6c8a" stroke-width="1.1" stroke-dasharray="2.6 2.44" stroke-dashoffset="1.1"/>
<line x1="123.6" y1="285" x2="123.6" y2="468" stroke="#df6c8a" stroke-width="1.1" stroke-dasharray="2.6 2.44" stroke-dashoffset="1.1"/>
<line x1="437.5" y1="97" x2="437.5" y2="279" stroke="#222" stroke-width="1.25" stroke-dasharray="2.8 2.24" stroke-dashoffset="1.3"/>
<line x1="437.5" y1="285" x2="437.5" y2="468" stroke="#222" stroke-width="1.25" stroke-dasharray="2.8 2.24" stroke-dashoffset="0.9"/>
<text x="114.9" y="465.8" class="lb" style="fill:#bf3a3a;font-size:12px">A</text>
<text x="428" y="466" class="lb" style="font-size:12px;fill:#333">B</text>
</svg>
<!-- scrollbar -->
<div class="abs" style="left:13px;top:474px;width:686px;height:13.5px;background:#f3f3f3"></div>
<div class="abs" style="left:28px;top:474px;width:657px;height:13px;background:#f6f6f6;border-bottom:1px solid #a0a0a0;box-sizing:border-box"></div>
<svg class="abs" style="left:18px;top:477.5px" width="5" height="7" viewBox="0 0 5 7"><path d="M4,0.7v5.2L0.6,3.3z" fill="#505050"/></svg>
<div class="abs" style="left:671px;top:474.5px;width:13px;height:12px;box-sizing:border-box;border:1px solid #a8a8a8;background:linear-gradient(#f4f4f4,#c8c8c8)"></div>
<div class="abs" style="left:674px;top:477px;width:7px;height:1.3px;background:#888"></div>
<svg class="abs" style="left:689px;top:475px" width="8" height="11" viewBox="0 0 8 11"><path d="M1,2v6l3.5,-3z" fill="#666"/><path d="M6.5,1L4.5,10" stroke="#aaa" stroke-width="0.8"/></svg>
</body></html>
